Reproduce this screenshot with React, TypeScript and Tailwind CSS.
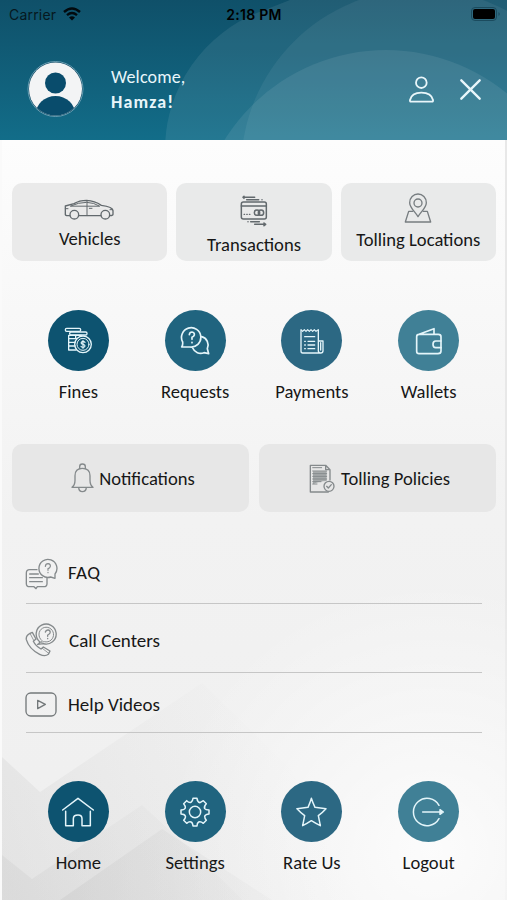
import React from "react";

type IconProps = {
  w: number;
  h: number;
  box: string;
  stroke?: number;
  className?: string;
  children: React.ReactNode;
};

function Icon({ w, h, box, stroke = 4, className = "", children }: IconProps) {
  return (
    <svg
      width={w}
      height={h}
      viewBox={box}
      fill="none"
      stroke="currentColor"
      strokeWidth={stroke}
      strokeLinecap="round"
      strokeLinejoin="round"
      className={`shrink-0 ${className}`}
    >
      {children}
    </svg>
  );
}

const CarIcon = () => (
  <Icon w={50} h={21} box="0 0 150 63" className="-ml-[2px]">
    <circle cx="31" cy="47" r="13" />
    <circle cx="124" cy="47" r="13" />
    <path d="M17 50H8Q3 49 4 43V21L30 14Q46 4 68 4Q92 5 112 19Q146 23 147 35V46Q147 50 138 50M45 50H110" />
    <path d="M20 21Q44 10 68 10Q90 11 106 21ZM69 5V50M76 28H84M4 29H12M138 32H146" strokeWidth={3} />
  </Icon>
);

const TransactionIcon = () => (
  <Icon w={28} h={33} box="0 0 84 99" stroke={4.5}>
    <rect x="4" y="24" width="75" height="51" rx="6" />
    <path d="M4 36H79M12 10H44M20 17H56M12 7L9 10L12 13M66 17V17" />
    <path d="M12 61H14M20 61H22M28 61H30" strokeWidth={3.5} />
    <path d="M32 83H58M44 91H77M72 87L77 91L72 95M24 83V83" />
    <circle cx="51" cy="56" r="8" />
    <circle cx="63" cy="56" r="8" />
  </Icon>
);

const LocationIcon = () => (
  <Icon w={28} h={31} box="0 0 84 93" stroke={4}>
    <path d="M42 71C34 57 17 44 17 29A25 26 0 0 1 67 29C67 44 50 57 42 71Z" />
    <circle cx="42" cy="30" r="12" />
    <path d="M26 55H14L4 87H80L70 55H58" />
  </Icon>
);

const FinesIcon = () => (
  <Icon w={28} h={28} box="0 0 84 84" stroke={4}>
    <rect x="4" y="4" width="46" height="9" rx="4" />
    <rect x="17" y="15" width="52" height="9" rx="4" />
    <path d="M14 25H52M14 25V69H36M14 35H38M14 46H33M14 57H33M35 25V33" />
    <circle cx="57" cy="52" r="25" />
    <circle cx="57" cy="52" r="18" strokeWidth={3} />
    <path d="M63 46Q57 40 52 46Q50 51 57 52Q65 54 62 59Q57 64 51 58M57 40V64" strokeWidth={3.5} />
  </Icon>
);

const RequestsIcon = () => (
  <Icon w={30} h={30} box="0 0 90 90" stroke={5}>
    <path d="M8 48A29 29 0 1 1 30 63L5 63Q9 58 8 48Z" />
    <path d="M65 32A26 26 0 0 1 82 68L86 83L72 80A26 26 0 0 1 38 66" />
    <path d="M28 26Q29 18 36 18Q44 19 43 27Q42 31 36 34V40M36 49V50" />
  </Icon>
);

const PaymentsIcon = () => (
  <Icon w={24} h={26} box="0 0 72 78" stroke={4}>
    <path d="M55 7V68Q55 75 62 75Q69 75 69 68V39H55M62 75H8Q3 75 3 69V7M62 44V66" />
    <path d="M3 5L8 10L13 5L18 10L23 5L28 10L33 5L38 10L43 5L48 10L55 5" strokeWidth={3.5} />
    <path d="M14 26H44M24 40H44M24 51H44M24 62H44M14 40H16M14 51H16M14 62H16" />
  </Icon>
);

const WalletIcon = () => (
  <Icon w={28} h={28} box="0 0 84 84" stroke={5}>
    <path d="M12 22Q5 22 5 29V73Q5 80 12 80H69Q78 80 78 72V29Q78 22 70 22H12L57 5V20" />
    <path d="M78 42H62Q54 42 54 52Q54 62 62 62H78" />
  </Icon>
);

const BellIcon = () => (
  <Icon w={23} h={30} box="0 0 69 90" stroke={4}>
    <path d="M3 73Q12 67 12 52V38Q12 16 34 16Q57 16 57 38V52Q57 67 66 73Z" />
    <path d="M26 17V11Q26 3 34 3Q43 3 43 11V17M23 74Q24 86 34 86Q45 86 46 74" />
  </Icon>
);

const PolicyIcon = () => (
  <Icon w={26} h={29} box="0 0 78 87" stroke={4}>
    <path d="M44 84H4V4H50L63 17V48M50 4V17H63M58 84H46" />
    <path d="M12 22H53V51Q31 51 12 61Z" fill="#a6aaab" stroke="none" />
    <path d="M11 11H38M11 21H53M11 29H53M11 37H53M11 45H53M11 53H36M11 60H24" strokeWidth={3} />
    <circle cx="60" cy="67" r="15" />
    <path d="M53 67L58 72L67 62" />
  </Icon>
);

const FaqIcon = () => (
  <Icon w={33} h={32} box="0 0 99 96">
    <path d="M36 35H14Q4 35 4 45V77Q4 86 14 86H27L33 92L37 86H56Q66 86 66 77V59" />
    <path d="M77 57A27 27 0 1 1 90 48V61Z" />
    <path d="M14 48H40M14 59H52M14 71H52" />
    <path d="M61 25Q62 17 69 17Q77 18 76 25Q75 30 69 32V37M69 43V44" strokeWidth={3.5} />
  </Icon>
);

const CallIcon = () => (
  <Icon w={34} h={34} box="0 0 102 102" stroke={4}>
    <path d="M44 56A30 30 0 1 1 55 62L38 64Q44 62 44 56Z" />
    <path d="M50 52A22 22 0 1 1 58 56L47 58Z" strokeWidth={3} />
    <path d="M61 27Q63 20 70 21Q77 23 75 30Q73 34 68 36V40M68 46V47" />
    <path d="M15 31L22 28L33 48L25 55Q31 68 48 78L55 72L75 84L70 94Q60 102 44 94Q12 78 4 50Q2 38 15 31Z" />
    <path d="M15 31L26 52M52 76L71 91" strokeWidth={2.5} />
  </Icon>
);

const VideoIcon = () => (
  <Icon w={32} h={25} box="0 0 96 75">
    <rect x="3" y="3" width="90" height="69" rx="14" />
    <path d="M38 25V50L61 37Z" />
  </Icon>
);

const HomeIcon = () => (
  <Icon w={32} h={30} box="0 0 96 90" stroke={4.5}>
    <path d="M2 39L48 4L94 39M11 43V86H34V65Q34 54 48 54Q60 54 60 65V86H85V43" />
  </Icon>
);

const GearIcon = () => (
  <Icon w={30} h={30} box="0 0 90 90" stroke={4.5}>
    <path d="M39 4H51Q52 15 60 17Q65 14 70 11L79 20Q71 28 74 35Q77 39 87 39V51Q76 52 74 58Q74 64 79 70L70 79Q62 72 56 75Q51 78 51 87H39Q38 77 33 75Q27 73 20 79L11 70Q18 62 16 57Q13 51 3 51V39Q13 39 16 33Q17 27 11 20L20 11Q27 18 33 16Q38 13 39 4Z" />
    <circle cx="45" cy="45" r="17" />
  </Icon>
);

const StarIcon = () => (
  <Icon w={31} h={30} box="0 0 93 90" stroke={4.5}>
    <path d="M46 4Q49 14 57 31Q73 34 90 35Q80 46 67 56Q70 71 73 86Q59 79 46 71Q34 79 20 86Q23 71 26 56Q13 46 3 35Q20 34 36 31Q43 15 46 4Z" />
  </Icon>
);

const LogoutIcon = () => (
  <Icon w={33} h={30} box="0 0 99 90" stroke={4.5}>
    <path d="M81 25A41 41 0 1 0 81 65M32 45H84" />
    <path d="M84 38L94 45L84 52Z" fill="currentColor" />
  </Icon>
);

const topActions = [
  { id: 1, name: "Fines", icon: <FinesIcon />, color: "bg-[#0d5370]" },
  { id: 2, name: "Requests", icon: <RequestsIcon />, color: "bg-[#20647f]" },
  { id: 3, name: "Payments", icon: <PaymentsIcon />, color: "bg-[#2c6883]" },
  { id: 4, name: "Wallets", icon: <WalletIcon />, color: "bg-[#408096]" },
];

const bottomActions = [
  { id: 1, name: "Home", icon: <HomeIcon />, color: "bg-[#0d5370]" },
  { id: 2, name: "Settings", icon: <GearIcon />, color: "bg-[#20647f]" },
  { id: 3, name: "Rate Us", icon: <StarIcon />, color: "bg-[#2c6883]" },
  { id: 4, name: "Logout", icon: <LogoutIcon />, color: "bg-[#408096]" },
];

function Actions({ items }: { items: typeof topActions }) {
  return (
    <div className="grid grid-cols-4 pl-5 pr-5">
      {items.map((item) => (
        <button key={item.id} className="flex flex-col items-center">
          <span
            className={`w-[61px] h-[61px] rounded-full flex items-center justify-center text-[#e4f5fa] ${item.color}`}
          >
            {item.icon}
          </span>
          <span className="mt-[9px] mb-px leading-6">{item.name}</span>
        </button>
      ))}
    </div>
  );
}

function Header() {
  return (
    <header className="relative h-[140px] overflow-hidden bg-gradient-to-b from-[#0f5069] to-[#126d89]">
      <svg className="absolute inset-0" width="507" height="140" fill="#ffffff">
        <path d="M165 150A148 148 0 0 1 262 11L290 0H507V150Z" fillOpacity="0.08" />
        <circle cx="421" cy="169" r="180" fillOpacity="0.06" />
        <circle cx="386" cy="240" r="190" fillOpacity="0.08" />
      </svg>
      <div className="relative grid grid-cols-3 items-center h-7 pl-[9px] pr-[6px] font-['Inter'] text-[14px] text-[#061820]">
        <div className="flex items-center gap-[7px]">
          <span className="tracking-[0.2px]">Carrier</span>
          <svg width="18" height="14" viewBox="0 0 18 14" fill="none" stroke="#020a0e" strokeWidth="2.4">
            <path d="M1 5Q9 -2 17 5M4 8.2Q9 4 14 8.2" />
            <path d="M6 10.5Q9 8 12 10.5L9 13.5Z" fill="#020a0e" stroke="none" />
          </svg>
        </div>
        <span className="-ml-[2px] text-center font-semibold tracking-[0.3px] text-black">2:18 PM</span>
        <div className="flex items-center justify-end">
          <svg width="30" height="15" viewBox="0 0 30 15">
            <rect x="0.5" y="0.5" width="25" height="13" rx="3.5" fill="none" stroke="#1b4b5e" />
            <rect x="2" y="2" width="22" height="10" rx="2" fill="#000" />
            <path d="M27.5 5Q30 7 27.5 9Z" fill="#1b4b5e" />
          </svg>
        </div>
      </div>
      <div className="relative flex items-center pt-[32px] pl-[27px] pr-[26px] text-[#e9f6fa]">
        <svg width="57" height="58" viewBox="0 0 57 58">
          <defs>
            <clipPath id="avatar">
              <circle cx="28.5" cy="29" r="26.5" />
            </clipPath>
          </defs>
          <circle cx="28.5" cy="29" r="27.5" fill="#0b4762" stroke="#7fb0c3" strokeWidth="0.8" />
          <g clipPath="url(#avatar)">
            <rect width="57" height="58" fill="#f3f4f5" />
            <circle cx="28.5" cy="23" r="10.5" fill="#094c6c" />
            <ellipse cx="28.5" cy="55" rx="20" ry="19" fill="#094c6c" />
          </g>
        </svg>
        <div className="ml-[27px] mt-[2px] flex-1 leading-[25px] text-[18px]">
          <p className="tracking-[0.15px]">Welcome,</p>
          <p className="font-bold tracking-[1.1px]">Hamza!</p>
        </div>
        <Icon w={25} h={27} box="0 0 75 81" stroke={5.5}>
          <circle cx="37" cy="20" r="16" />
          <path d="M6 77Q2 77 3 72Q8 50 37 50Q67 50 72 72Q73 77 69 77Z" />
        </Icon>
        <Icon w={21} h={21} box="0 0 63 63" stroke={7} className="ml-[26px]">
          <path d="M4 4L59 59M59 4L4 59" />
        </Icon>
      </div>
    </header>
  );
}

// Soft facets behind the lower half of the menu
function Backdrop() {
  return (
    <svg className="absolute inset-0" width="507" height="760" viewBox="0 140 507 760">
      <defs>
        <linearGradient id="facet" gradientUnits="userSpaceOnUse" x1="0" y1="860" x2="290" y2="740">
          <stop offset="0" stopColor="#c8c8c8" stopOpacity="0.3" />
          <stop offset="1" stopColor="#d8d8d8" stopOpacity="0" />
        </linearGradient>
        <linearGradient id="peak" gradientUnits="userSpaceOnUse" x1="60" y1="900" x2="270" y2="880">
          <stop offset="0" stopColor="#c4c4c4" stopOpacity="0.35" />
          <stop offset="1" stopColor="#d0d0d0" stopOpacity="0.1" />
        </linearGradient>
        <radialGradient id="shine" gradientUnits="userSpaceOnUse" cx="430" cy="850" r="270">
          <stop offset="0" stopColor="#fff" stopOpacity="0.8" />
          <stop offset="1" stopColor="#fff" stopOpacity="0" />
        </radialGradient>
      </defs>
      <rect x="0" y="560" width="507" height="340" fill="url(#shine)" />
      <path d="M0 757L38 792L200 683L290 770L350 900H0Z" fill="url(#facet)" />
      <path d="M0 855L30 879L140 805L200 860L240 900H0Z" fill="url(#facet)" />
      <path d="M58 900L160 829L270 900Z" fill="url(#peak)" />
    </svg>
  );
}

export default function App() {
  return (
    <div className="w-[507px] h-[900px] overflow-hidden bg-white font-['Carlito','Lato',sans-serif] text-[18.6px] text-[#171717]">
      <Header />
      <main className="relative h-[760px] bg-gradient-to-b from-[#fdfdfd] via-[#f2f2f2] to-[#efefef] border-l-2 border-l-[#fafafa] border-r-2 border-r-[#e8e8e8]">
        <Backdrop />
        <div className="relative -mx-0.5 pt-[43px]">
          <div className="grid grid-cols-3 gap-[9px] pl-3 pr-[11px] text-[#171717]">
            <button className="h-[78px] rounded-[10px] bg-[#eaeaea] flex flex-col items-center pt-[16px]">
              <span className="h-[21px] text-[#62696d]"><CarIcon /></span>
              <span className="mt-[7px] leading-6">Vehicles</span>
            </button>
            <button className="h-[78px] rounded-[10px] bg-[#e9eaea] flex flex-col items-center pt-[11px]">
              <span className="h-[33px] text-[#62696d]"><TransactionIcon /></span>
              <span className="mt-[6px] leading-6">Transactions</span>
            </button>
            <button className="h-[78px] rounded-[10px] bg-[#e9eaea] flex flex-col items-center pt-[10px]">
              <span className="h-[31px] text-[#777d80]"><LocationIcon /></span>
              <span className="mt-[4px] leading-6">Tolling Locations</span>
            </button>
          </div>

          <div className="mt-[49px]">
            <Actions items={topActions} />
          </div>

          <div className="mt-[39px] grid grid-cols-2 gap-[10px] pl-3 pr-[11px]">
            <button className="h-[68px] rounded-[10px] bg-[#e7e7e7] flex items-center justify-center gap-[5px] pl-[5px]">
              <span className="text-[#858a8c]"><BellIcon /></span>
              <span className="mt-[2px]">Notifications</span>
            </button>
            <button className="h-[68px] rounded-[10px] bg-[#e7e7e7] flex items-center justify-center gap-[6px] pl-1">
              <span className="text-[#858a8c]"><PolicyIcon /></span>
              <span className="mt-[2px]">Tolling Policies</span>
            </button>
          </div>

          <ul className="mt-[32px] pl-[26px] pr-[25px] text-[19px]">
            <li className="h-[60px] border-b border-[#c6c6c6] flex items-center">
              <span className="-ml-px w-[43px] text-[#858a8c]"><FaqIcon /></span>
              <span className="tracking-[0.4px]">FAQ</span>
            </li>
            <li className="h-[69px] border-b border-[#c6c6c6] flex items-center pt-1">
              <span className="-ml-px w-[44px] text-[#858a8c]"><CallIcon /></span>
              <span className="mt-[3px]">Call Centers</span>
            </li>
            <li className="h-[60px] border-b border-[#c6c6c6] flex items-center pt-1">
              <span className="-ml-px w-[43px] text-[#73787a]"><VideoIcon /></span>
              <span className="mt-[2px]">Help Videos</span>
            </li>
          </ul>

          <div className="mt-[48px]">
            <Actions items={bottomActions} />
          </div>
        </div>
      </main>
    </div>
  );
}
